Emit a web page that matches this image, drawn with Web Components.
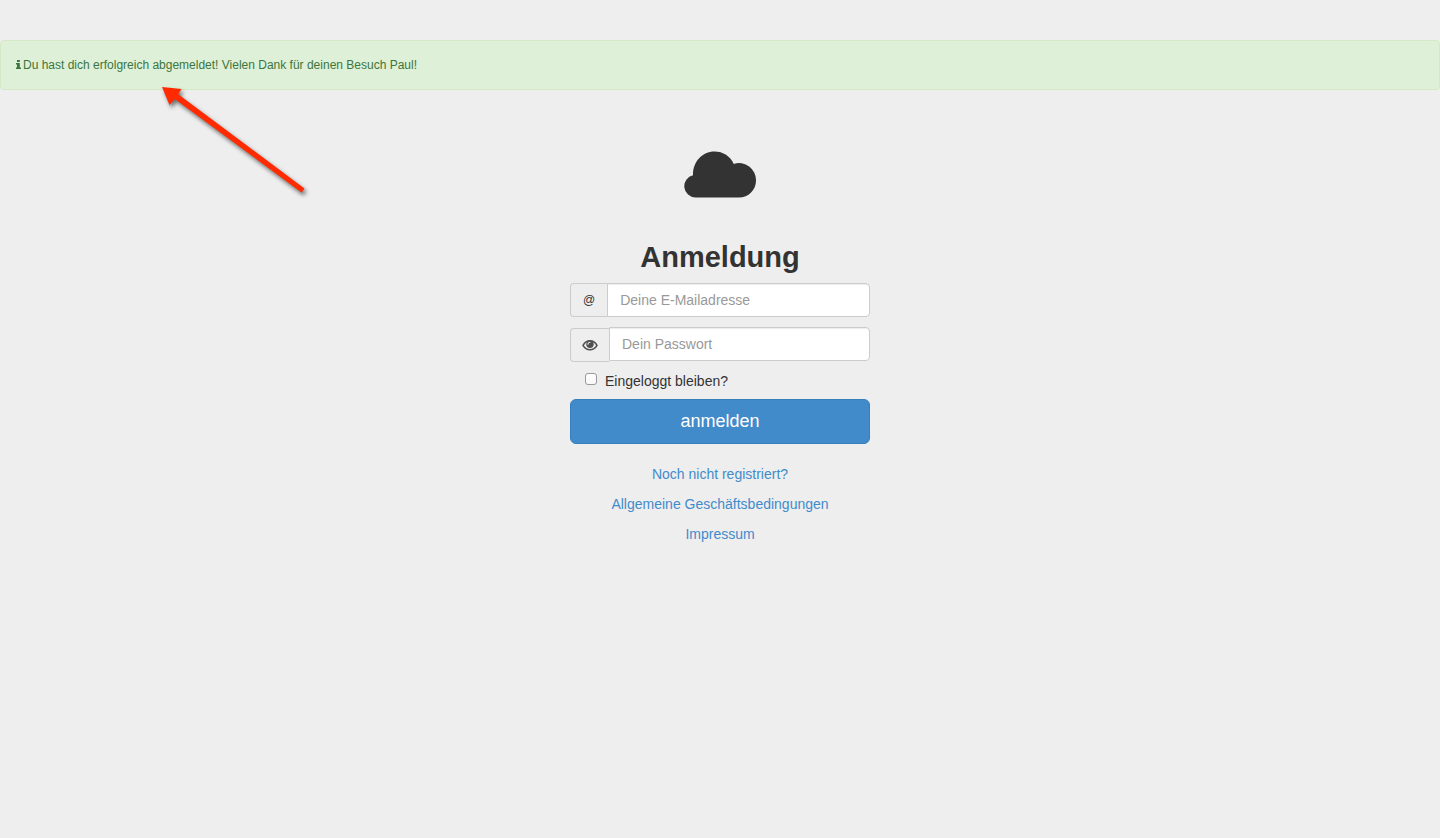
<!DOCTYPE html>
<html lang="de">
<head>
<meta charset="utf-8">
<meta name="viewport" content="width=device-width, initial-scale=1">
<title>Anmeldung</title>
<style>
body { margin: 0; padding: 40px 0; background: #eee; color: #333; font: 14px/20px "Liberation Sans", Arial, sans-serif; }
</style>
</head>
<body>
<status-alert>Du hast dich erfolgreich abgemeldet! Vielen Dank für deinen Besuch Paul!</status-alert>
<login-panel>
  <cloud-logo slot="logo"></cloud-logo>
  <span slot="title">Anmeldung</span>
  <text-link slot="links" to="#registrieren">Noch nicht registriert?</text-link>
  <text-link slot="links" to="#agb">Allgemeine Geschäftsbedingungen</text-link>
  <text-link slot="links" to="#impressum">Impressum</text-link>
</login-panel>

<script>
const define = (name, html, setup) => customElements.define(name, class extends HTMLElement {
  constructor() {
    super();
    this.attachShadow({ mode: 'open' }).innerHTML = html;
  }
  connectedCallback() { if (setup) setup(this, this.shadowRoot); }
});

define('pointer-arrow', `
<style>
:host { display: block; pointer-events: none; }
svg { display: block; overflow: visible; filter: drop-shadow(2px 3px 2px rgba(0,0,0,.55)); }
</style>
<svg width="144" height="106" viewBox="0 0 144 106" aria-hidden="true">
  <path d="M0 0 19.500 2 16.200 7.300 142.500 101.500 139.500 105.500 12.800 12 7.500 18Z" fill="#ff2a00"/>
</svg>`);

define('status-alert', `
<style>
:host { display: block; position: relative; box-sizing: border-box; padding: 15px; border: 1px solid #d6e9c6; border-radius: 4px; background: #dff0d8; color: #3c763d; font-size: 12px; line-height: 18px; }
div { display: flex; align-items: center; gap: 2px; }
pointer-arrow { position: absolute; left: 161px; top: 46px; }
</style>
<div role="status">
  <svg width="5" height="10" viewBox="0 0 5 10" aria-hidden="true"><path fill="currentColor" d="M1 0h2.800v2H1zM0 3h3.800v4.500H5V9H0V7.500h1v-3H0z"/></svg>
  <span><slot></slot></span>
</div>
<pointer-arrow></pointer-arrow>`);

define('cloud-logo', `
<style>:host { display: block; } svg { display: block; margin: 0 auto; }</style>
<svg width="72" height="47" viewBox="0 0 72 47" fill="#333" aria-hidden="true">
  <path d="M11.500 46.500A11.300 11.300 0 0 1 9 24.200C8.600 11 18 .4 30.500.4 39 .4 46.500 5.200 49.800 12.900A17 17 0 0 1 72 29.500C72 39 64.500 46.500 55 46.500Z"/>
</svg>`);

define('text-link', `
<style>:host { display: block; } a { color: #428bca; text-decoration: none; } a:hover { text-decoration: underline; }</style>
<a><slot></slot></a>`, (el, root) => { root.querySelector('a').href = el.getAttribute('to'); });

define('input-group', `
<style>
:host { display: block; }
div { display: flex; align-items: flex-start; }
label { box-sizing: border-box; flex: none; display: flex; align-items: center; justify-content: center; height: 34px; padding: 0 12px; border: 1px solid #ccc; border-right: 0; border-radius: 4px 0 0 4px; background: #eee; color: #333; font-size: 12px; }
:host([type=password]) label { margin-top: 1px; padding: 0 11px; }
input { box-sizing: border-box; flex: 1; min-width: 0; height: 34px; margin: 0; padding: 6px 12px; border: 1px solid #ccc; border-radius: 0 4px 4px 0; background: #fff; color: #555; font: inherit; box-shadow: inset 0 1px 1px rgba(0,0,0,.075); outline: none; }
input:focus { border-color: #66afe9; }
input::placeholder { color: #999; opacity: 1; }
</style>
<div><label for="field"><slot></slot></label><input id="field"></div>`, (el, root) => {
  const input = root.querySelector('input');
  for (const name of ['type', 'placeholder']) input.setAttribute(name, el.getAttribute(name));
  input.setAttribute('aria-label', el.getAttribute('placeholder'));
});

define('eye-icon', `
<style>:host { display: block; } svg { display: block; }</style>
<svg width="16" height="12" viewBox="0 0 16 12" aria-hidden="true">
  <path d="M1 6.300C4.400.100 11.600.100 15 6.300 11.600 12.200 4.400 12.200 1 6.300Z" fill="none" stroke="#505050" stroke-width="1.500"/>
  <circle cx="8" cy="5.200" r="3.700" fill="#505050"/>
  <path d="M6 5.200A2 2 0 0 1 8 3.200" fill="none" stroke="#eee" stroke-width="1.100" stroke-linecap="round"/>
</svg>`);

define('check-option', `
<style>
:host { display: block; }
label { display: flex; gap: 8px; padding: 0 15px; }
input { appearance: none; box-sizing: border-box; flex: none; width: 12px; height: 12px; margin: 2px 0 0; border: 1px solid #999; border-radius: 3px; background: linear-gradient(#fff, #f8f8f8); }
input:checked { background: #428bca; }
</style>
<label><input type="checkbox"><span><slot></slot></span></label>`);

define('submit-button', `
<style>
:host { display: block; }
button { display: block; box-sizing: border-box; width: 100%; margin: 0; padding: 10px 16px; border: 1px solid #357ebd; border-radius: 6px; background: #428bca; color: #fff; font-family: inherit; font-size: 18px; line-height: 23px; cursor: pointer; }
</style>
<button type="button"><slot></slot></button>`);

define('login-panel', `
<style>
:host { display: block; box-sizing: border-box; max-width: 330px; margin: 61px auto 0; padding: 0 15px; }
h2 { margin: 42px 0 8px; font-size: 29px; line-height: 35px; font-weight: 700; text-align: center; }
form { display: flex; flex-direction: column; gap: 9px; margin: 0; }
input-group[type=email] { margin-bottom: 1px; }
check-option { margin-bottom: -1px; }
nav { display: flex; flex-direction: column; gap: 10px; margin-top: 20px; text-align: center; }
</style>
<slot name="logo"></slot>
<h2><slot name="title"></slot></h2>
<form>
  <input-group type="email" placeholder="Deine E-Mailadresse">@</input-group>
  <input-group type="password" placeholder="Dein Passwort"><eye-icon></eye-icon></input-group>
  <check-option>Eingeloggt bleiben?</check-option>
  <submit-button>anmelden</submit-button>
</form>
<nav><slot name="links"></slot></nav>`);
</script>
</body>
</html>
